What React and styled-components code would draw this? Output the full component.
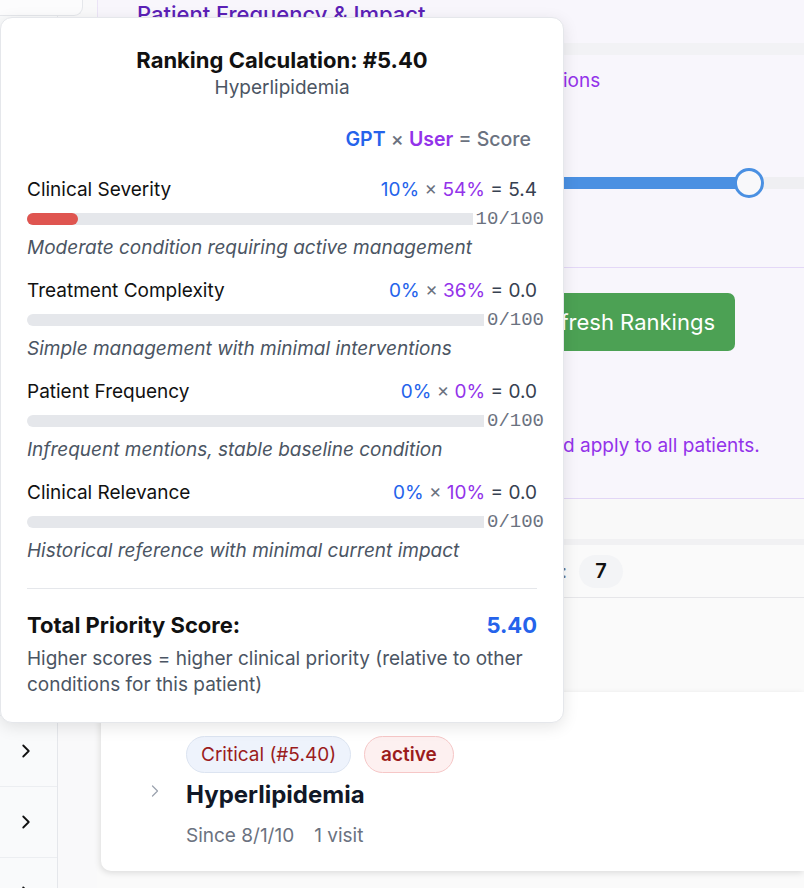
import React from "react";
import styled, { createGlobalStyle } from "styled-components";
import { ChevronRight } from "lucide-react";

const GlobalStyle = createGlobalStyle`
  * { box-sizing: border-box; }
  body {
    margin: 0;
    font-family: Inter, "Noto Sans", sans-serif;
    background: #f9f9fa;
  }
`;

const Page = styled.div`
  position: relative;
  display: flex;
  height: 888px;
  overflow: hidden;
`;

const Sidebar = styled.div`
  width: 58px;
  flex-shrink: 0;
  background: #f9fafb;
  border-right: 1px solid #e5e7eb;
`;

const SideHeader = styled.div`
  position: relative;
  z-index: 1;
  width: 83px;
  height: 16px;
  margin-bottom: 61px;
  background: #fcfcfd;
  border: 1px solid #e5e7eb;
  border-top: none;
  border-left: none;
  border-radius: 0 0 9px 0;
`;

const SideRow = styled.div`
  height: 71px;
  display: flex;
  align-items: center;
  justify-content: center;
  border-bottom: 1px solid #eceef1;
  color: #111;
  padding-right: 6px;
`;

const Main = styled.div`
  flex: 1;
  padding-left: 39px;
  display: flex;
  flex-direction: column;
`;

const WeightPanel = styled.section`
  height: 499px;
  background: #f8f6fc;
  border-left: 1px solid #ebe4f6;
  border-bottom: 1px solid #e2d6f6;
  padding-left: 39px;
  display: flex;
  flex-direction: column;
`;

const PanelTitle = styled.h2`
  margin: -1px 0 0;
  font-size: 22px;
  line-height: 30px;
  font-weight: 500;
  color: #5b21b6;
  white-space: nowrap;
`;

const Band = styled.div`
  height: 12px;
  margin: 14px 0 0 -39px;
  background: #f2f2f5;
`;

const PanelText = styled.p`
  margin: ${p => p.$top}px 0 0;
  font-size: 19px;
  line-height: 24px;
  color: #9333ea;
  white-space: nowrap;
`;

const Slider = styled.div`
  position: relative;
  margin-top: 75px;
  height: 30px;
  display: flex;
  align-items: center;
`;

const Track = styled.div`
  flex: 1;
  height: 12px;
  background: #efeff2;
  display: flex;
`;

const TrackFill = styled.div`
  height: 100%;
  background: #4a90e2;
`;

const Thumb = styled.div`
  position: absolute;
  top: 0;
  width: 30px;
  height: 30px;
  border-radius: 50%;
  border: 3px solid #4a90e2;
  background: #f8f8fa;
  transform: translateX(-50%);
`;

const PanelRule = styled.div`
  height: 1px;
  margin: 69px 0 0 -39px;
  background: #e4d8f7;
`;

const ButtonRow = styled.div`
  display: flex;
  justify-content: flex-end;
  padding-right: 69px;
  margin-top: 25px;
`;

const RefreshButton = styled.button`
  height: 58px;
  padding: 0 20px;
  border: none;
  border-radius: 7px;
  background: #4ca154;
  color: #fff;
  font-family: inherit;
  font-size: 22px;
`;

const Spacer = styled.div`
  height: 40px;
  background: #f9f9f9;
`;

const FilterBar = styled.div`
  height: 59px;
  border-top: 6px solid #f1f1f3;
  border-bottom: 1px solid #e6e6e9;
  background: #fafafa;
  display: flex;
  align-items: center;
  justify-content: flex-end;
  gap: 12px;
  padding-right: 181px;
  box-shadow: 0 5px 0 #f1f1f3;
`;

const FilterLabel = styled.span`
  font-size: 19px;
  color: #6b7280;
`;

const CountPill = styled.span`
  width: 44px;
  height: 33px;
  border-radius: 17px;
  background: #f3f4f6;
  display: flex;
  align-items: center;
  justify-content: center;
  font-size: 20px;
  font-weight: 600;
  color: #111;
`;

const ListArea = styled.div`
  flex: 1;
  background: #fafafa;
  padding: 94px 0 0 4px;
`;

const ConditionCard = styled.div`
  height: 179px;
  background: #fff;
  border-radius: 10px 0 0 10px;
  box-shadow: -1px 2px 6px rgba(0, 0, 0, 0.12);
  display: flex;
  padding: 44px 0 0 44px;
`;

const Toggle = styled.div`
  width: 41px;
  padding-top: 45px;
  color: #9ca3af;
`;

const CardBody = styled.div`
  display: flex;
  flex-direction: column;
`;

const BadgeRow = styled.div`
  display: flex;
  gap: 13px;
`;

const Badge = styled.span`
  height: 37px;
  padding: 0 ${p => (p.$strong ? 16 : 14)}px;
  border-radius: 19px;
  display: flex;
  align-items: center;
  font-size: 19px;
  font-weight: ${p => (p.$strong ? 600 : 400)};
  color: #9b1c1c;
  background: ${p => p.$bg};
  border: 1px solid ${p => p.$border};
`;

const ConditionName = styled.h3`
  margin: 6px 0 0;
  font-size: 24px;
  line-height: 32px;
  font-weight: 700;
  color: #111827;
`;

const Meta = styled.div`
  margin-top: 13px;
  display: flex;
  gap: 20px;
  font-size: 19px;
  line-height: 24px;
  color: #6b7280;
`;

/* ranking popover */

const Popover = styled.div`
  position: absolute;
  z-index: 2;
  top: 17px;
  left: 0;
  width: 564px;
  height: 706px;
  background: #fff;
  border: 1px solid #e5e7eb;
  border-radius: 12px;
  box-shadow: 0 4px 16px rgba(0, 0, 0, 0.1);
  padding: 28px 26px 0;
`;

const PopTitle = styled.h1`
  margin: 0;
  text-align: center;
  font-size: 22px;
  line-height: 28px;
  font-weight: 700;
  color: #111;
`;

const PopSubtitle = styled.div`
  margin-top: 2px;
  text-align: center;
  font-size: 19px;
  line-height: 24px;
  color: #4b5563;
`;

const Legend = styled.div`
  margin: 27px 6px 0 0;
  text-align: right;
  font-size: 19.5px;
  line-height: 24px;
  font-weight: 500;
  color: #6b7280;
`;

const Gpt = styled.span`
  color: #2563eb;
  font-weight: ${p => (p.$bold ? 600 : 400)};
`;

const User = styled.span`
  color: #9333ea;
  font-weight: ${p => (p.$bold ? 600 : 400)};
`;

const Factor = styled.div`
  margin-top: ${p => (p.$first ? 27 : 19)}px;
`;

const FactorHead = styled.div`
  display: flex;
  justify-content: space-between;
  font-size: 19px;
  line-height: 24px;
  color: #111;
`;

const Formula = styled.span`
  color: #374151;
`;

const Times = styled.span`
  color: #6b7280;
`;

const Meter = styled.div`
  position: relative;
  margin: 11px 0;
  height: 12px;
  border-radius: 6px;
  background: #e5e7eb;
`;

const MeterFill = styled.div`
  height: 100%;
  border-radius: 6px;
  background: #df5550;
`;

const MeterValue = styled.span`
  position: absolute;
  right: -7px;
  top: 50%;
  transform: translateY(-50%);
  padding-left: 3px;
  background: #fff;
  font-family: "Liberation Mono", monospace;
  font-size: 19px;
  line-height: 22px;
  color: #6b7280;
`;

const FactorNote = styled.div`
  font-size: 19px;
  line-height: 24px;
  font-style: italic;
  color: #4b5563;
`;

const Divider = styled.hr`
  margin: 25px 0 0;
  border: none;
  border-top: 1px solid #e5e7eb;
`;

const TotalRow = styled.div`
  margin-top: 21px;
  display: flex;
  justify-content: space-between;
  font-size: 22px;
  line-height: 30px;
  font-weight: 700;
  color: #111;
`;

const TotalValue = styled.span`
  color: #2563eb;
`;

const TotalNote = styled.p`
  margin: 6px 0 0;
  font-size: 19px;
  line-height: 26px;
  color: #4b5563;
`;

const factors = [
  { name: "Clinical Severity", gpt: 10, user: 54, score: "5.4", note: "Moderate condition requiring active management" },
  { name: "Treatment Complexity", gpt: 0, user: 36, score: "0.0", note: "Simple management with minimal interventions" },
  { name: "Patient Frequency", gpt: 0, user: 0, score: "0.0", note: "Infrequent mentions, stable baseline condition" },
  { name: "Clinical Relevance", gpt: 0, user: 10, score: "0.0", note: "Historical reference with minimal current impact" },
];

const sliderValue = 0.918;

export default function App() {
  return (
    <>
      <GlobalStyle />
      <Page>
        <Sidebar>
          <SideHeader />
          {Array.from({ length: 12 }).map((_, i) => (
            <SideRow key={i}>
              <ChevronRight size={22} strokeWidth={2} />
            </SideRow>
          ))}
        </Sidebar>
        <Main>
          <WeightPanel>
            <PanelTitle>Patient Frequency &amp; Impact</PanelTitle>
            <Band />
            <PanelText $top={14}>How often the condition appears over consultations</PanelText>
            <Slider>
              <Track>
                <TrackFill style={{ width: `${sliderValue * 100}%` }} />
              </Track>
              <Thumb style={{ left: `${sliderValue * 100}%` }} />
            </Slider>
            <PanelRule />
            <ButtonRow>
              <RefreshButton>Refresh Rankings</RefreshButton>
            </ButtonRow>
            <PanelText $top={83}>All weights are stored in your profile settings and apply to all patients.</PanelText>
          </WeightPanel>
          <Spacer />
          <FilterBar>
            <FilterLabel>Conditions:</FilterLabel>
            <CountPill>7</CountPill>
          </FilterBar>
          <ListArea>
            <ConditionCard>
              <Toggle>
                <ChevronRight size={20} strokeWidth={1.5} />
              </Toggle>
              <CardBody>
                <BadgeRow>
                  <Badge $bg="#eef3fc" $border="#dce4f1">Critical (#5.40)</Badge>
                  <Badge $strong $bg="#fdf0f0" $border="#f6c7c7">active</Badge>
                </BadgeRow>
                <ConditionName>Hyperlipidemia</ConditionName>
                <Meta>
                  <span>Since 8/1/10</span>
                  <span>1 visit</span>
                </Meta>
              </CardBody>
            </ConditionCard>
          </ListArea>
        </Main>

        <Popover>
          <PopTitle>Ranking Calculation: #5.40</PopTitle>
          <PopSubtitle>Hyperlipidemia</PopSubtitle>
          <Legend>
            <Gpt $bold>GPT</Gpt> × <User $bold>User</User> = Score
          </Legend>
          {factors.map((f, i) => (
            <Factor key={f.name} $first={i === 0}>
              <FactorHead>
                <span>{f.name}</span>
                <Formula>
                  <Gpt>{f.gpt}%</Gpt> <Times>×</Times> <User>{f.user}%</User> = {f.score}
                </Formula>
              </FactorHead>
              <Meter>
                <MeterFill style={{ width: `${f.gpt}%` }} />
                <MeterValue>{f.gpt}/100</MeterValue>
              </Meter>
              <FactorNote>{f.note}</FactorNote>
            </Factor>
          ))}
          <Divider />
          <TotalRow>
            <span>Total Priority Score:</span>
            <TotalValue>5.40</TotalValue>
          </TotalRow>
          <TotalNote>
            Higher scores = higher clinical priority (relative to other conditions for this patient)
          </TotalNote>
        </Popover>
      </Page>
    </>
  );
}
